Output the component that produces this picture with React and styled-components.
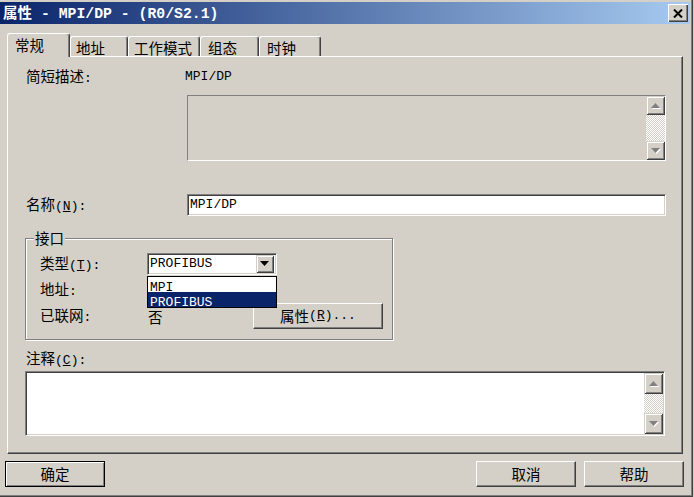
import React from "react";
import styled, { createGlobalStyle } from "styled-components";

const FACE = "#d4d0c8";
const SHADOW = "#808080";
const DARK = "#404040";
const NAVY = "#0a246a";

const GlobalStyle = createGlobalStyle`
  * {
    box-sizing: border-box;
  }
  html,
  body {
    margin: 0;
    padding: 0;
    background: ${FACE};
  }
  body {
    font-family: "Noto Sans CJK SC", "DejaVu Sans", sans-serif;
    font-size: 14.5px;
    line-height: 18px;
    color: #000;
  }
`;

const Latin = styled.span`
  font-family: "Liberation Mono", "DejaVu Sans Mono", monospace;
  font-size: ${(p) => p.$size || 13}px;
`;
const Key = styled.span`
  text-decoration: underline;
`;

const Window = styled.div`
  display: flex;
  flex-direction: column;
  width: 693px;
  height: 497px;
  padding-top: 2px;
  border-right: 1px solid ${DARK};
  border-bottom: 1px solid ${DARK};
  box-shadow: inset -1px -1px 0 ${SHADOW};
  background: ${FACE};
`;

const TitleBar = styled.div`
  display: flex;
  align-items: center;
  justify-content: space-between;
  height: 22px;
  margin-right: 2px;
  padding: 0 2px 0 3px;
  background: linear-gradient(to right, ${NAVY}, #a6caf0);
  color: #fff;
  font-weight: 700;
`;

const CloseButton = styled.div`
  display: flex;
  align-items: center;
  justify-content: center;
  width: 20px;
  height: 18px;
  background: ${FACE};
  box-shadow: inset 1px 1px 0 #fff, inset -1px -1px 0 ${DARK},
    inset -2px -2px 0 ${SHADOW};
`;

const TabRow = styled.div`
  position: relative;
  z-index: 1;
  display: flex;
  align-items: flex-end;
  height: 23px;
  margin-top: 9px;
  padding-left: 7px;
`;

const Tab = styled.div`
  width: ${(p) => p.$w}px;
  height: ${(p) => (p.$active ? 24 : 20)}px;
  margin-bottom: ${(p) => (p.$active ? -1 : 0)}px;
  padding: 2px 0 0 ${(p) => p.$pad}px;
  border-top: 1px solid #fff;
  border-left: 1px solid #fff;
  border-right: 1px solid ${DARK};
  border-radius: 3px 3px 0 0;
  box-shadow: inset -1px 0 0 ${SHADOW};
  background: ${FACE};
  white-space: nowrap;
`;

const Panel = styled.div`
  display: flex;
  flex-direction: column;
  align-items: flex-start;
  width: 676px;
  height: 398px;
  margin-left: 7px;
  padding: 11px 16px 0 17px;
  border: 1px solid;
  border-color: #fff ${DARK} ${DARK} #fff;
  box-shadow: inset -1px -1px 0 ${SHADOW};
`;

const FieldRow = styled.div`
  display: flex;
  align-items: center;
  height: ${(p) => p.$h || 18}px;
  margin-top: ${(p) => p.$mt || 0}px;
`;

const Label = styled.div`
  width: ${(p) => p.$w || 160}px;
  padding-left: 1px;
  white-space: nowrap;
`;

const ReadOnlyBox = styled.div`
  display: flex;
  justify-content: flex-end;
  width: 479px;
  height: 66px;
  margin: 9px 0 0 162px;
  border: 1px solid;
  border-color: ${SHADOW} #fff #fff ${SHADOW};
`;

const Sunken = styled.div`
  display: flex;
  border: 1px solid;
  border-color: ${SHADOW} #fff #fff ${SHADOW};
  box-shadow: inset 1px 1px 0 ${DARK}, inset -1px -1px 0 ${FACE};
  background: #fff;
`;

const TextInput = styled(Sunken)`
  align-items: center;
  width: 479px;
  height: 22px;
  padding-left: 2px;
`;

const CommentBox = styled(Sunken)`
  justify-content: flex-end;
  width: 640px;
  height: 65px;
  margin-top: 3px;
  padding: 1px;
`;

const ScrollBar = styled.div`
  display: flex;
  flex-direction: column;
  width: ${(p) => p.$w}px;
  height: 100%;
  background-color: #fff;
  background-image: conic-gradient(
    ${FACE} 25%,
    #fff 0 50%,
    ${FACE} 0 75%,
    #fff 0
  );
  background-size: 2px 2px;
`;

const ScrollButton = styled.div`
  display: flex;
  align-items: center;
  justify-content: center;
  flex: none;
  height: ${(p) => p.$h}px;
  background: ${FACE};
  box-shadow: inset 1px 1px 0 ${FACE}, inset -1px -1px 0 ${DARK},
    inset 2px 2px 0 #fff, inset -2px -2px 0 ${SHADOW};
`;

const ScrollTrack = styled.div`
  flex: 1;
`;

const GroupBox = styled.div`
  position: relative;
  width: 368px;
  height: 102px;
  margin-top: 22px;
  padding: 12px 0 0 13px;
  border: 1px solid ${SHADOW};
  box-shadow: inset 1px 1px 0 #fff, 1px 1px 0 #fff;
`;

const Legend = styled.span`
  position: absolute;
  top: -10px;
  left: 8px;
  padding: 0 1px;
  background: ${FACE};
`;

const GroupGrid = styled.div`
  display: grid;
  grid-template-columns: 108px 106px 130px;
  grid-template-rows: repeat(3, 26px);
  align-items: center;
`;

const ComboWrap = styled.div`
  position: relative;
  grid-column: 2 / span 2;
  width: 130px;
  height: 22px;
`;

const ComboField = styled(Sunken)`
  align-items: center;
  justify-content: space-between;
  height: 100%;
  padding: 2px;
`;

const ComboButton = styled.div`
  display: flex;
  align-items: center;
  justify-content: center;
  width: 18px;
  height: 18px;
  background: ${FACE};
  box-shadow: inset 1px 1px 0 ${FACE}, inset -1px -1px 0 ${DARK},
    inset 2px 2px 0 #fff, inset -2px -2px 0 ${SHADOW};
`;

const DropList = styled.div`
  position: absolute;
  top: calc(100% + 1px);
  left: 0;
  z-index: 2;
  width: 130px;
  border: 1px solid #000;
  background: #fff;
`;

const DropItem = styled.div`
  height: 15px;
  padding-left: 2px;
  line-height: 15px;
  background: ${(p) => (p.$selected ? NAVY : "#fff")};
  color: ${(p) => (p.$selected ? "#fff" : "#000")};
`;

const Value = styled.div`
  padding-left: 1px;
  line-height: 15px;
`;

const Button = styled.button`
  display: flex;
  align-items: center;
  justify-content: center;
  width: ${(p) => p.$w || 100}px;
  height: 26px;
  margin: 0;
  padding: 0;
  font: inherit;
  color: #000;
  background: ${FACE};
  border: 1px solid;
  border-color: #fff ${DARK} ${DARK} #fff;
  box-shadow: inset -1px -1px 0 ${SHADOW};
  cursor: default;
`;

const DefaultButton = styled(Button)`
  border: 1px solid #000;
  box-shadow: inset 1px 1px 0 #fff, inset -1px -1px 0 ${SHADOW};
`;

const Footer = styled.div`
  display: flex;
  gap: 8px;
  margin-top: 7px;
  padding: 0 8px 0 5px;
  & > :nth-child(2) {
    margin-left: auto;
  }
`;

function Arrow({ down, disabled }) {
  const pts = down ? "0,0 9,0 4.5,5" : "4.5,0 9,5 0,5";
  return (
    <svg width="10" height="6" viewBox="0 0 10 6">
      {disabled && (
        <polygon points={pts} fill="#fff" transform="translate(1,1)" />
      )}
      <polygon points={pts} fill={disabled ? SHADOW : "#000"} />
    </svg>
  );
}

function Scroll({ width, buttonHeight }) {
  return (
    <ScrollBar $w={width}>
      <ScrollButton $h={buttonHeight}>
        <Arrow disabled />
      </ScrollButton>
      <ScrollTrack />
      <ScrollButton $h={buttonHeight}>
        <Arrow down disabled />
      </ScrollButton>
    </ScrollBar>
  );
}

const tabs = [
  { name: "常规", w: 63, pad: 7, active: true },
  { name: "地址", w: 58, pad: 5 },
  { name: "工作模式", w: 72, pad: 5 },
  { name: "组态", w: 59, pad: 7 },
  { name: "时钟", w: 62, pad: 7 },
];

export default function App() {
  return (
    <>
      <GlobalStyle />
      <Window>
        <TitleBar>
          <span>
            属性<Latin $size={14.8}> - MPI/DP - (R0/S2.1)</Latin>
          </span>
          <CloseButton>
            <svg width="10" height="9" viewBox="0 0 10 9">
              <path d="M1 0.5 L9 8.5 M9 0.5 L1 8.5" stroke="#000" strokeWidth="2" />
            </svg>
          </CloseButton>
        </TitleBar>

        <TabRow>
          {tabs.map((t) => (
            <Tab key={t.name} $w={t.w} $pad={t.pad} $active={t.active}>
              {t.name}
            </Tab>
          ))}
        </TabRow>

        <Panel>
          <FieldRow>
            <Label>
              简短描述<Latin>:</Latin>
            </Label>
            <Latin>MPI/DP</Latin>
          </FieldRow>
          <ReadOnlyBox>
            <Scroll width={19} buttonHeight={19} />
          </ReadOnlyBox>

          <FieldRow $mt={33} $h={22}>
            <Label $w={162}>
              名称
              <Latin>
                (<Key>N</Key>):
              </Latin>
            </Label>
            <TextInput>
              <Latin>MPI/DP</Latin>
            </TextInput>
          </FieldRow>

          <GroupBox>
            <Legend>接口</Legend>
            <GroupGrid>
              <Label $w={108}>
                类型
                <Latin>
                  (<Key>T</Key>):
                </Latin>
              </Label>
              <ComboWrap>
                <ComboField>
                  <Latin>PROFIBUS</Latin>
                  <ComboButton>
                    <Arrow down />
                  </ComboButton>
                </ComboField>
                <DropList>
                  <DropItem>
                    <Latin>MPI</Latin>
                  </DropItem>
                  <DropItem $selected>
                    <Latin>PROFIBUS</Latin>
                  </DropItem>
                </DropList>
              </ComboWrap>

              <Label $w={108}>
                地址<Latin>:</Latin>
              </Label>
              <span />
              <span />

              <Label $w={108}>
                已联网<Latin>:</Latin>
              </Label>
              <Value>否</Value>
              <Button $w={130}>
                属性
                <Latin>
                  (<Key>R</Key>)...
                </Latin>
              </Button>
            </GroupGrid>
          </GroupBox>

          <FieldRow $mt={10}>
            <Label $w={200}>
              注释
              <Latin>
                (<Key>C</Key>):
              </Latin>
            </Label>
          </FieldRow>
          <CommentBox>
            <Scroll width={19} buttonHeight={21} />
          </CommentBox>
        </Panel>

        <Footer>
          <DefaultButton>确定</DefaultButton>
          <Button>取消</Button>
          <Button>帮助</Button>
        </Footer>
      </Window>
    </>
  );
}
